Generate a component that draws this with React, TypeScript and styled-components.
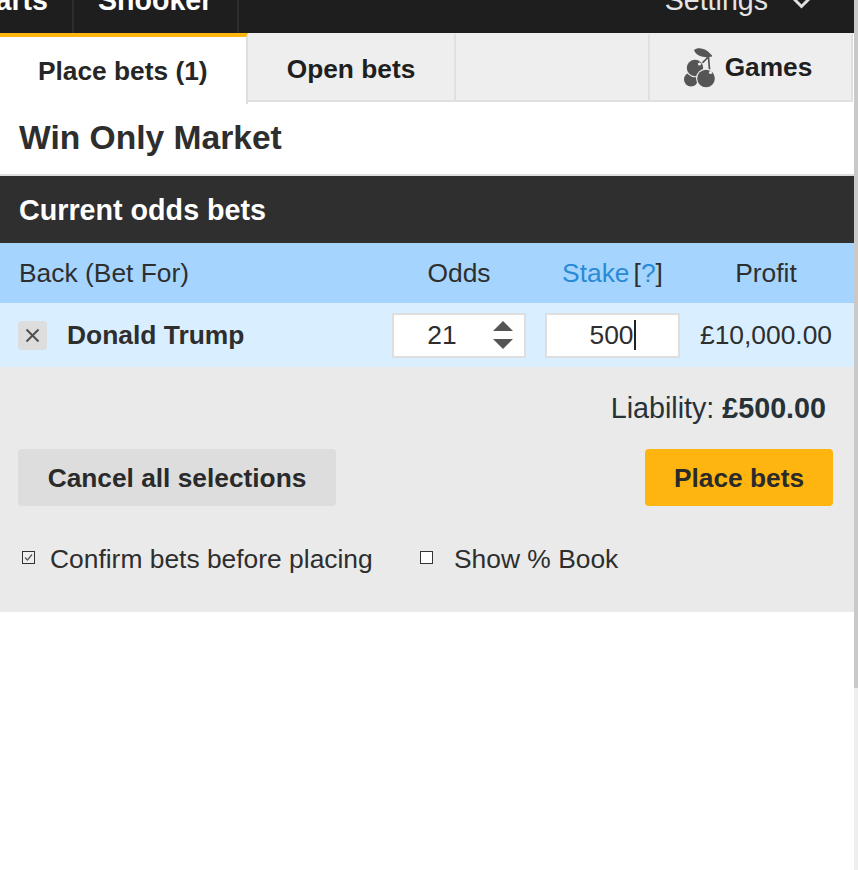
import React from "react";
import styled, { createGlobalStyle } from "styled-components";

const Global = createGlobalStyle`
  html, body { margin: 0; padding: 0; height: 100%; background: #fff; overflow: hidden; }
  body { font-family: "Liberation Sans", Arial, sans-serif; color: #2e2e2e; }
  * { box-sizing: border-box; }
`;

const Page = styled.div`
  position: relative;
  width: 858px;
  height: 870px;
  overflow: hidden;
`;
const Panel = styled.div`
  width: 854px;
`;
const Scrollbar = styled.div`
  position: absolute;
  top: 0;
  right: 0;
  width: 4px;
  height: 870px;
  background: #eeeeee;
  &::before {
    content: "";
    display: block;
    height: 688px;
    background: #c9c9c9;
  }
`;

const Nav = styled.div`
  height: 33px;
  background: #1e1e1e;
  display: flex;
  overflow: hidden;
`;
const NavItem = styled.div<{ $width: number; $alignEnd?: boolean }>`
  width: ${(p) => p.$width}px;
  height: 33px;
  padding: 0 24px;
  border-right: 2px solid #2d2d2d;
  color: #fff;
  font-weight: 700;
  font-size: 28.6px;
  line-height: 0px;
  white-space: nowrap;
  display: flex;
  justify-content: ${(p) => (p.$alignEnd ? "flex-end" : "flex-start")};
`;
const NavRight = styled.div`
  margin-left: auto;
  display: flex;
  align-items: flex-start;
  gap: 25px;
  padding-right: 44px;
  color: #e4e4e4;
  font-size: 28.6px;
  line-height: 0px;
  svg { display: block; filter: blur(0.7px); }
`;

const Tabs = styled.div`
  display: flex;
  align-items: flex-start;
  width: 853px;
  height: 71px;
`;
const ActiveTab = styled.div`
  width: 248px;
  height: 71px;
  background: #fff;
  border-top: 4px solid #ffb50f;
  border-right: 2px solid #dedede;
  padding-top: 16px;
  padding-left: 38px;
  font-weight: 700;
  font-size: 26.3px;
  line-height: 36px;
  white-space: nowrap;
  color: #262626;
`;
const Tab = styled.div<{ $width: number; $down?: number; $left?: number }>`
  width: ${(p) => p.$width}px;
  height: 69px;
  background: #eeeeee;
  border-top: 2px solid #eeeeee;
  border-bottom: 2px solid #e0e0e0;
  border-right: 2px solid #e0e0e0;
  display: flex;
  align-items: center;
  justify-content: center;
  gap: 9px;
  padding-top: ${(p) => p.$down ?? 0}px;
  padding-right: ${(p) => p.$left ?? 0}px;
  font-weight: 700;
  font-size: 26.3px;
  color: #1f1f1f;
  white-space: nowrap;
  svg { display: block; flex: none; }
`;

const Title = styled.h1`
  margin: 0;
  height: 72px;
  padding: 0 19px;
  border-bottom: 2px solid #dedede;
  font-size: 33.6px;
  font-weight: 700;
  line-height: 68px;
  color: #2e2e2e;
`;
const SectionBar = styled.div`
  height: 67px;
  padding: 0 19px;
  background: #2f2f2f;
  color: #fff;
  font-size: 28.7px;
  font-weight: 700;
  line-height: 68px;
`;
const Columns = styled.div`
  display: grid;
  grid-template-columns: 355px 134px 135px 134px;
  column-gap: 19px;
  padding-left: 18px;
  align-items: center;
`;
const HeaderRow = styled(Columns)`
  height: 60px;
  background: #a5d5ff;
  font-size: 26.4px;
  color: #2e2e2e;
`;
const BackLabel = styled.div`
  padding-left: 1px;
`;
const HeadCell = styled.div`
  text-align: center;
`;
const StakeHead = styled(HeadCell)`
  color: #2a8ad4;
  white-space: nowrap;
  span { margin-left: 4px; color: #2a8ad4; }
  b { font-weight: 400; color: #2e2e2e; }
`;
const BetRow = styled(Columns)`
  height: 64px;
  background: #d9eeff;
  font-size: 26.4px;
`;
const Runner = styled.div`
  display: flex;
  align-items: center;
  gap: 20px;
  font-weight: 700;
  white-space: nowrap;
`;
const Remove = styled.div`
  width: 29px;
  height: 29px;
  background: #dddddd;
  border-radius: 4px;
  display: flex;
  align-items: center;
  justify-content: center;
`;
const Field = styled.div`
  position: relative;
  height: 45px;
  background: #fff;
  border: 2px solid #dedede;
  display: flex;
  align-items: center;
`;
const OddsValue = styled.div`
  width: 96px;
  margin-right: 3px;
  text-align: center;
`;
const Spinner = styled.div`
  display: flex;
  flex-direction: column;
  gap: 8px;
  svg { display: block; }
`;
const StakeValue = styled.div`
  width: 100%;
  text-align: center;
  span {
    display: inline-block;
    border-right: 2px solid #222;
    line-height: 30px;
    height: 30px;
  }
`;
const Profit = styled.div`
  text-align: center;
  white-space: nowrap;
`;

const Footer = styled.div`
  height: 245px;
  background: #eaeaea;
  padding: 21px 21px 0 18px;
`;
const Liability = styled.div`
  text-align: right;
  padding-right: 7px;
  font-size: 28.7px;
  line-height: 40px;
  color: #263238;
  b { font-weight: 700; }
`;
const Actions = styled.div`
  display: flex;
  justify-content: space-between;
  margin-top: 21px;
`;
const Button = styled.div<{ $primary?: boolean; $width: number }>`
  width: ${(p) => p.$width}px;
  height: 57px;
  border-radius: 4px;
  background: ${(p) => (p.$primary ? "#ffb50f" : "#dddddd")};
  font-weight: 700;
  font-size: 26.3px;
  line-height: 58px;
  text-align: center;
  color: #2a2a2a;
`;
const Options = styled.div`
  display: flex;
  align-items: center;
  margin-top: 32px;
  padding-left: 4px;
  font-size: 26.4px;
  line-height: 42px;
`;
const Option = styled.div<{ $gap: number; $width?: number }>`
  display: flex;
  align-items: center;
  gap: ${(p) => p.$gap}px;
  width: ${(p) => (p.$width ? `${p.$width}px` : "auto")};
  white-space: nowrap;
  svg { display: block; margin-top: -4px; }
`;

const Cherry = () => (
  <svg width="32" height="41" viewBox="0 0 32 41" aria-hidden="true">
    <path d="M10 3C14 -0.5 22 1 27 7.5 29 8.5 28 10 26.5 9.8 20 11 12 9 10 3Z" fill="#555" />
    <path d="M24.5 9C24.8 15 25.5 22 26 29M24.5 9.5C22.5 12 19.5 15 16 18" fill="none" stroke="#555" strokeWidth="1.7" />
    <circle cx="7" cy="32.5" r="7" fill="#555" />
    <circle cx="11" cy="21" r="9.3" fill="#eee" />
    <circle cx="11" cy="21" r="8.2" fill="#555" />
    <circle cx="22" cy="31.5" r="10" fill="#eee" />
    <circle cx="22" cy="31.5" r="8.8" fill="#555" />
    <circle cx="15.5" cy="17" r="1.6" fill="#eee" />
    <circle cx="26.5" cy="25.5" r="1.6" fill="#eee" />
  </svg>
);

export default function App() {
  return (
    <Page>
      <Global />
      <Panel>
        <Nav>
          <NavItem $width={74} $alignEnd>
            Darts
          </NavItem>
          <NavItem $width={165}>Snooker</NavItem>
          <NavRight>
            <span>Settings</span>
            <svg width="17" height="10" viewBox="0 0 17 10" aria-hidden="true">
              <path d="M1 -1L8.5 6.5L16 -1" fill="none" stroke="#e0e0e0" strokeWidth="3" />
            </svg>
          </NavRight>
        </Nav>
        <Tabs>
          <ActiveTab>Place bets (1)</ActiveTab>
          <Tab $width={208} $down={3}>Open bets</Tab>
          <Tab $width={194} />
          <Tab $width={203} $left={5}>
            <Cherry />
            Games
          </Tab>
        </Tabs>
        <Title>Win Only Market</Title>
        <SectionBar>Current odds bets</SectionBar>
        <HeaderRow>
          <BackLabel>Back (Bet For)</BackLabel>
          <HeadCell>Odds</HeadCell>
          <StakeHead>
            Stake<span><b>[</b>?<b>]</b></span>
          </StakeHead>
          <HeadCell>Profit</HeadCell>
        </HeaderRow>
        <BetRow>
          <Runner>
            <Remove>
              <svg width="15" height="15" viewBox="0 0 15 15" aria-hidden="true">
                <path d="M1.5 1.5L13.5 13.5M13.5 1.5L1.5 13.5" stroke="#4f4f4f" strokeWidth="2" fill="none" />
              </svg>
            </Remove>
            Donald Trump
          </Runner>
          <Field>
            <OddsValue>21</OddsValue>
            <Spinner>
              <svg width="20" height="10" viewBox="0 0 20 10" aria-hidden="true">
                <path d="M10 0L20 10H0Z" fill="#555" />
              </svg>
              <svg width="20" height="10" viewBox="0 0 20 10" aria-hidden="true">
                <path d="M0 0H20L10 10Z" fill="#555" />
              </svg>
            </Spinner>
          </Field>
          <Field>
            <StakeValue>
              <span>500</span>
            </StakeValue>
          </Field>
          <Profit>£10,000.00</Profit>
        </BetRow>
        <Footer>
          <Liability>
            Liability: <b>£500.00</b>
          </Liability>
          <Actions>
            <Button $width={318}>Cancel all selections</Button>
            <Button $width={188} $primary>
              Place bets
            </Button>
          </Actions>
          <Options>
            <Option $gap={15} $width={398}>
              <svg width="13" height="13" viewBox="0 0 13 13" aria-hidden="true">
                <rect x="0.5" y="0.5" width="12" height="12" fill="#eee" stroke="#333" />
                <path d="M3 6.5L5.5 9L10 3.5" fill="none" stroke="#555" strokeWidth="1.2" />
              </svg>
              Confirm bets before placing
            </Option>
            <Option $gap={21}>
              <svg width="13" height="13" viewBox="0 0 13 13" aria-hidden="true">
                <rect x="0.5" y="0.5" width="12" height="12" fill="#fff" stroke="#333" />
              </svg>
              Show % Book
            </Option>
          </Options>
        </Footer>
      </Panel>
      <Scrollbar />
    </Page>
  );
}
